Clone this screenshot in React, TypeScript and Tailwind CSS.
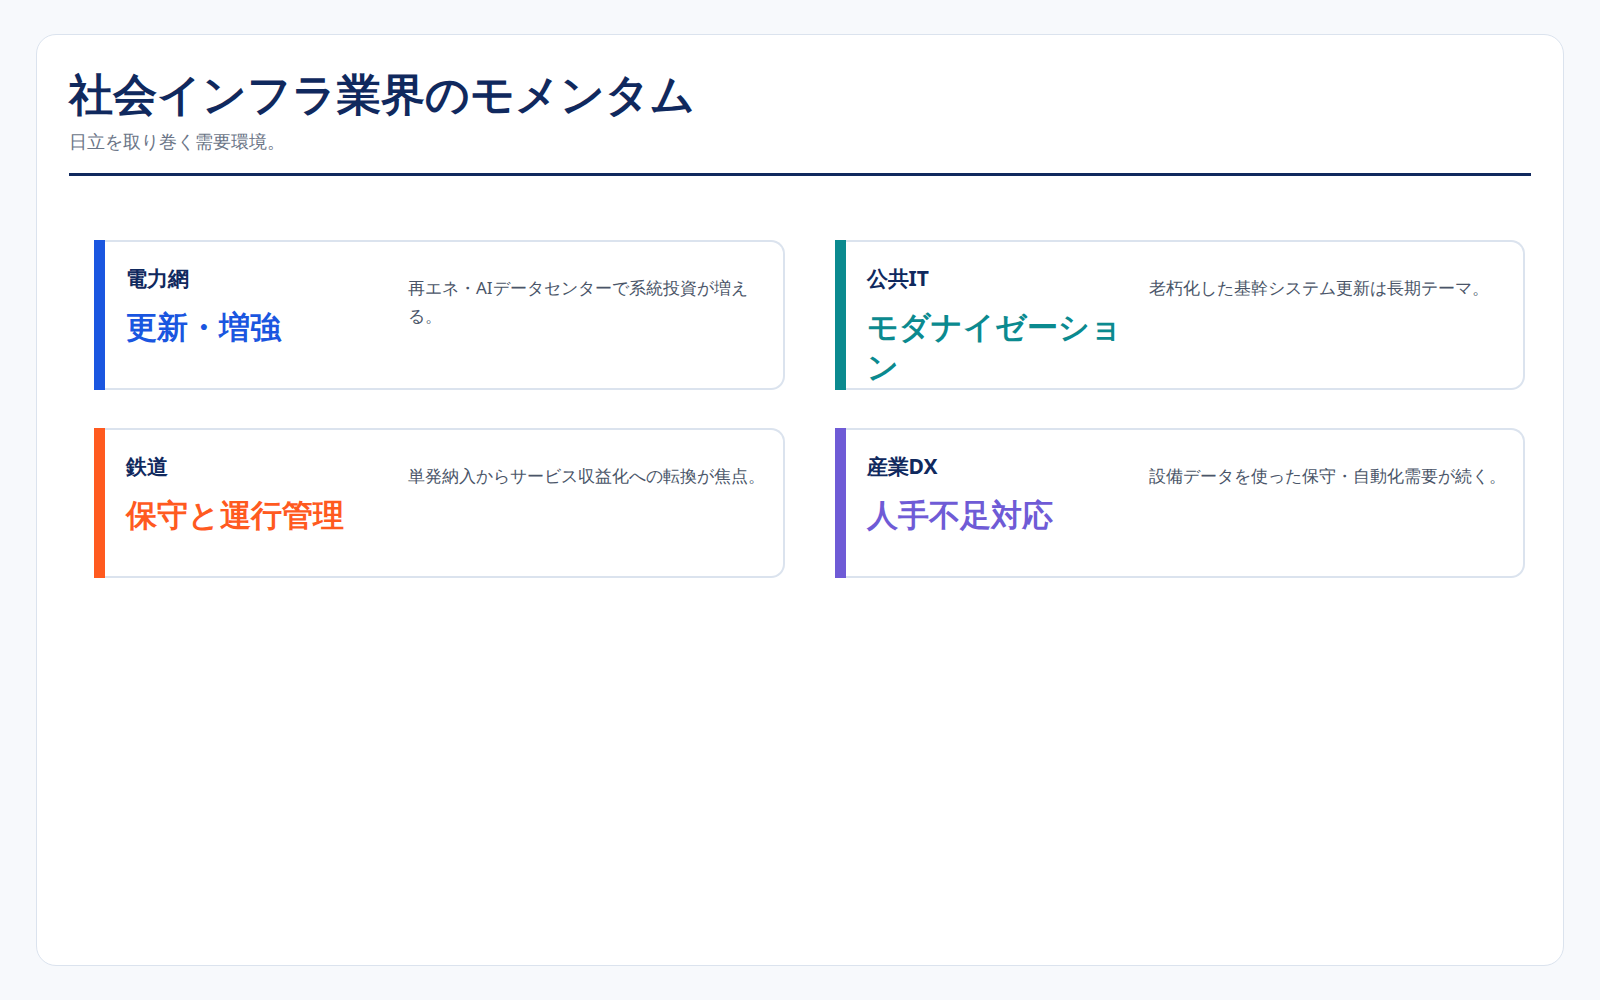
const items = [
  { label: "電力網", head: "更新・増強", desc: "再エネ・AIデータセンターで系統投資が増える。", bar: "bg-[#1a56e0]", text: "text-[#1a56e0]" },
  { label: "公共IT", head: "モダナイゼーション", desc: "老朽化した基幹システム更新は長期テーマ。", bar: "bg-[#0b8a8f]", text: "text-[#0b8a8f]" },
  { label: "鉄道", head: "保守と運行管理", desc: "単発納入からサービス収益化への転換が焦点。", bar: "bg-[#ff5a1f]", text: "text-[#ff5a1f]" },
  { label: "産業DX", head: "人手不足対応", desc: "設備データを使った保守・自動化需要が続く。", bar: "bg-[#6f5bd6]", text: "text-[#6f5bd6]" },
];

export default function App() {
  return (
    <main className="min-h-[1000px] bg-[#f7f9fc] px-9 py-[34px] font-['Noto_Sans_CJK_JP','Noto_Sans',sans-serif]">
      <section className="h-[932px] rounded-[20px] border border-[#dbe3ee] bg-white px-8 pt-[30px]">
        <h1 className="text-[44px] font-black leading-[56px] text-[#10295e]">社会インフラ業界のモメンタム</h1>
        <p className="mt-[6px] text-[18px] leading-7 text-[#6b7587]">日立を取り巻く需要環境。</p>
        <div className="mt-[18px] h-[3px] bg-[#10295e]" />
        <div className="ml-[25px] mr-[6px] mt-[64px] grid grid-cols-2 gap-x-[50px] gap-y-[38px]">
          {items.map((it) => (
            <div key={it.label} className="flex h-[150px]">
              <div className={`w-[11px] shrink-0 ${it.bar}`} />
              <div className="flex flex-1 rounded-r-[14px] border-2 border-l-0 border-[#dbe3ee] pt-[22px]">
                <div className="w-[303px] shrink-0 pl-[21px]">
                  <p className="text-[21px] font-bold leading-7 text-[#10295e]">{it.label}</p>
                  <p className={`mt-[14px] text-[31px] font-black leading-10 ${it.text}`}>{it.head}</p>
                </div>
                <p className="w-[360px] pt-[10px] text-[17px] leading-[28px] text-[#4a5568]">{it.desc}</p>
              </div>
            </div>
          ))}
        </div>
      </section>
    </main>
  );
}
